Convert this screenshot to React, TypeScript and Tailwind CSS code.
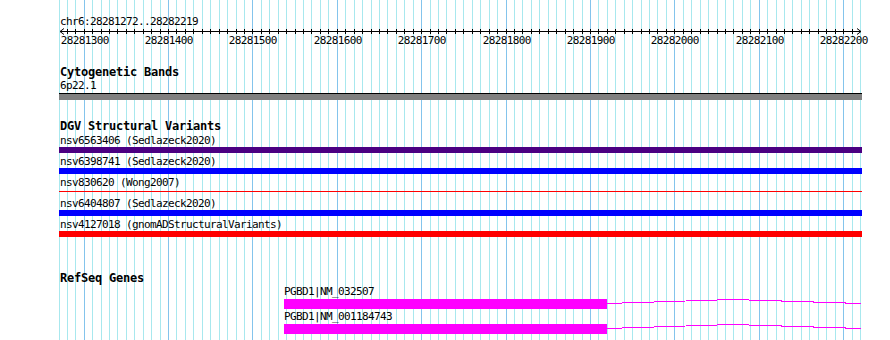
import React from 'react';

const START = 28281272;
const END = 28282219;
const LEFT = 60;
const WIDTH = 800;

const px = (bp: number) => LEFT + ((bp - START) * WIDTH) / (END - START + 1);

const steps: number[] = [];
for (let bp = 28281270; bp <= 28282220; bp += 10) steps.push(bp);

const variants = [
  { name: 'nsv6563406 (Sedlazeck2020)', color: 'bg-[#4b0082]', thin: false },
  { name: 'nsv6398741 (Sedlazeck2020)', color: 'bg-[#0000ff]', thin: false },
  { name: 'nsv830620 (Wong2007)', color: 'bg-[#ff0000]', thin: true },
  { name: 'nsv6404807 (Sedlazeck2020)', color: 'bg-[#0000ff]', thin: false },
  { name: 'nsv4127018 (gnomADStructuralVariants)', color: 'bg-[#ff0000]', thin: false },
];

const genes = ['PGBD1|NM_032507', 'PGBD1|NM_001184743'];

function Grid() {
  return (
    <svg className="absolute inset-0" width={890} height={340} shapeRendering="crispEdges">
      {steps.map(bp => (
        <rect
          key={bp}
          x={Math.max(59, Math.round(px(bp)))}
          y={0}
          width={1}
          height={340}
          fill={bp % 100 === 0 ? '#84c4ec' : '#a8e8ee'}
        />
      ))}
    </svg>
  );
}

function Ruler() {
  const y = 3;
  return (
    <svg width={890} height={20} className="block" shapeRendering="crispEdges">
      <rect x={60} y={y} width={801} height={1} fill="#000" />
      <path d={`M60 ${y + 0.5} L64 ${y - 2.5} M60 ${y + 0.5} L64 ${y + 3.5}`} stroke="#000" strokeWidth={1} fill="none" shapeRendering="auto" />
      <path d={`M861 ${y + 0.5} L857 ${y - 2.5} M861 ${y + 0.5} L857 ${y + 3.5}`} stroke="#000" strokeWidth={1} fill="none" shapeRendering="auto" />
      {steps
        .filter(bp => bp > START && bp < END)
        .map(bp => (
          <rect key={bp} x={Math.round(px(bp))} y={y - 2} width={1} height={5} fill="#000" />
        ))}
      {steps
        .filter(bp => bp % 100 === 0)
        .map(bp => (
          <text
            key={bp}
            x={Math.round(px(bp)) + 0.8}
            y={15.8}
            textAnchor="middle"
            fontSize={11}
            letterSpacing={-0.62}
            fontFamily="'DejaVu Sans Mono', monospace"
            fill="#000"
          >
            {bp}
          </text>
        ))}
    </svg>
  );
}

function Connector() {
  return (
    <svg width={254} height={10} className="block" shapeRendering="crispEdges">
      <polyline points="0,4.5 126,0.5 254,4.5" stroke="#ff00ff" strokeWidth={1} fill="none" />
    </svg>
  );
}

const title = 'pl-[60px] h-[13px] text-[12px] tracking-[-0.22px] font-bold';

export default function App() {
  return (
    <div className="relative w-[890px] h-[340px] bg-white overflow-hidden text-black font-['DejaVu_Sans_Mono',monospace] text-[11px] tracking-[-0.62px] leading-[13px]">
      <Grid />
      <div className="relative flex flex-col">
        <div className="h-[15px]" />
        <div className="pl-[60px] h-[13px]">chr6:28281272..28282219</div>
        <Ruler />

        <div className={`mt-[18px] ${title}`}>Cytogenetic Bands</div>
        <div className="pl-[60px] h-[13px]">6p22.1</div>
        <div className="mt-[1px] ml-[59px] w-[803px] h-[7px] bg-[#808080] border-t border-black" />

        <div className={`mt-[20px] ${title}`}>DGV Structural Variants</div>
        <div className="mt-[1px] flex flex-col">
          {variants.map(v => (
            <div key={v.name} className="flex flex-col h-[21px]">
              <div className="pl-[60px] h-[13px]">{v.name}</div>
              <div className="h-[6px] pl-[59px]">
                {v.thin ? (
                  <div className={`mt-[2px] w-[803px] h-[1px] ${v.color}`} />
                ) : (
                  <div className={`w-[803px] h-[6px] ${v.color}`} />
                )}
              </div>
            </div>
          ))}
        </div>

        <div className={`mt-[33px] ${title}`}>RefSeq Genes</div>
        <div className="mt-[1px] flex flex-col gap-[2px]">
          {genes.map(g => (
            <div key={g} className="flex flex-col pl-[284px]">
              <div className="relative z-10 h-[13px] leading-[12px]">{g}</div>
              <div className="flex items-start h-[10px]">
                <div className="w-[323px] h-[10px] bg-[#ff00ff]" />
                <Connector />
              </div>
            </div>
          ))}
        </div>
      </div>
    </div>
  );
}
